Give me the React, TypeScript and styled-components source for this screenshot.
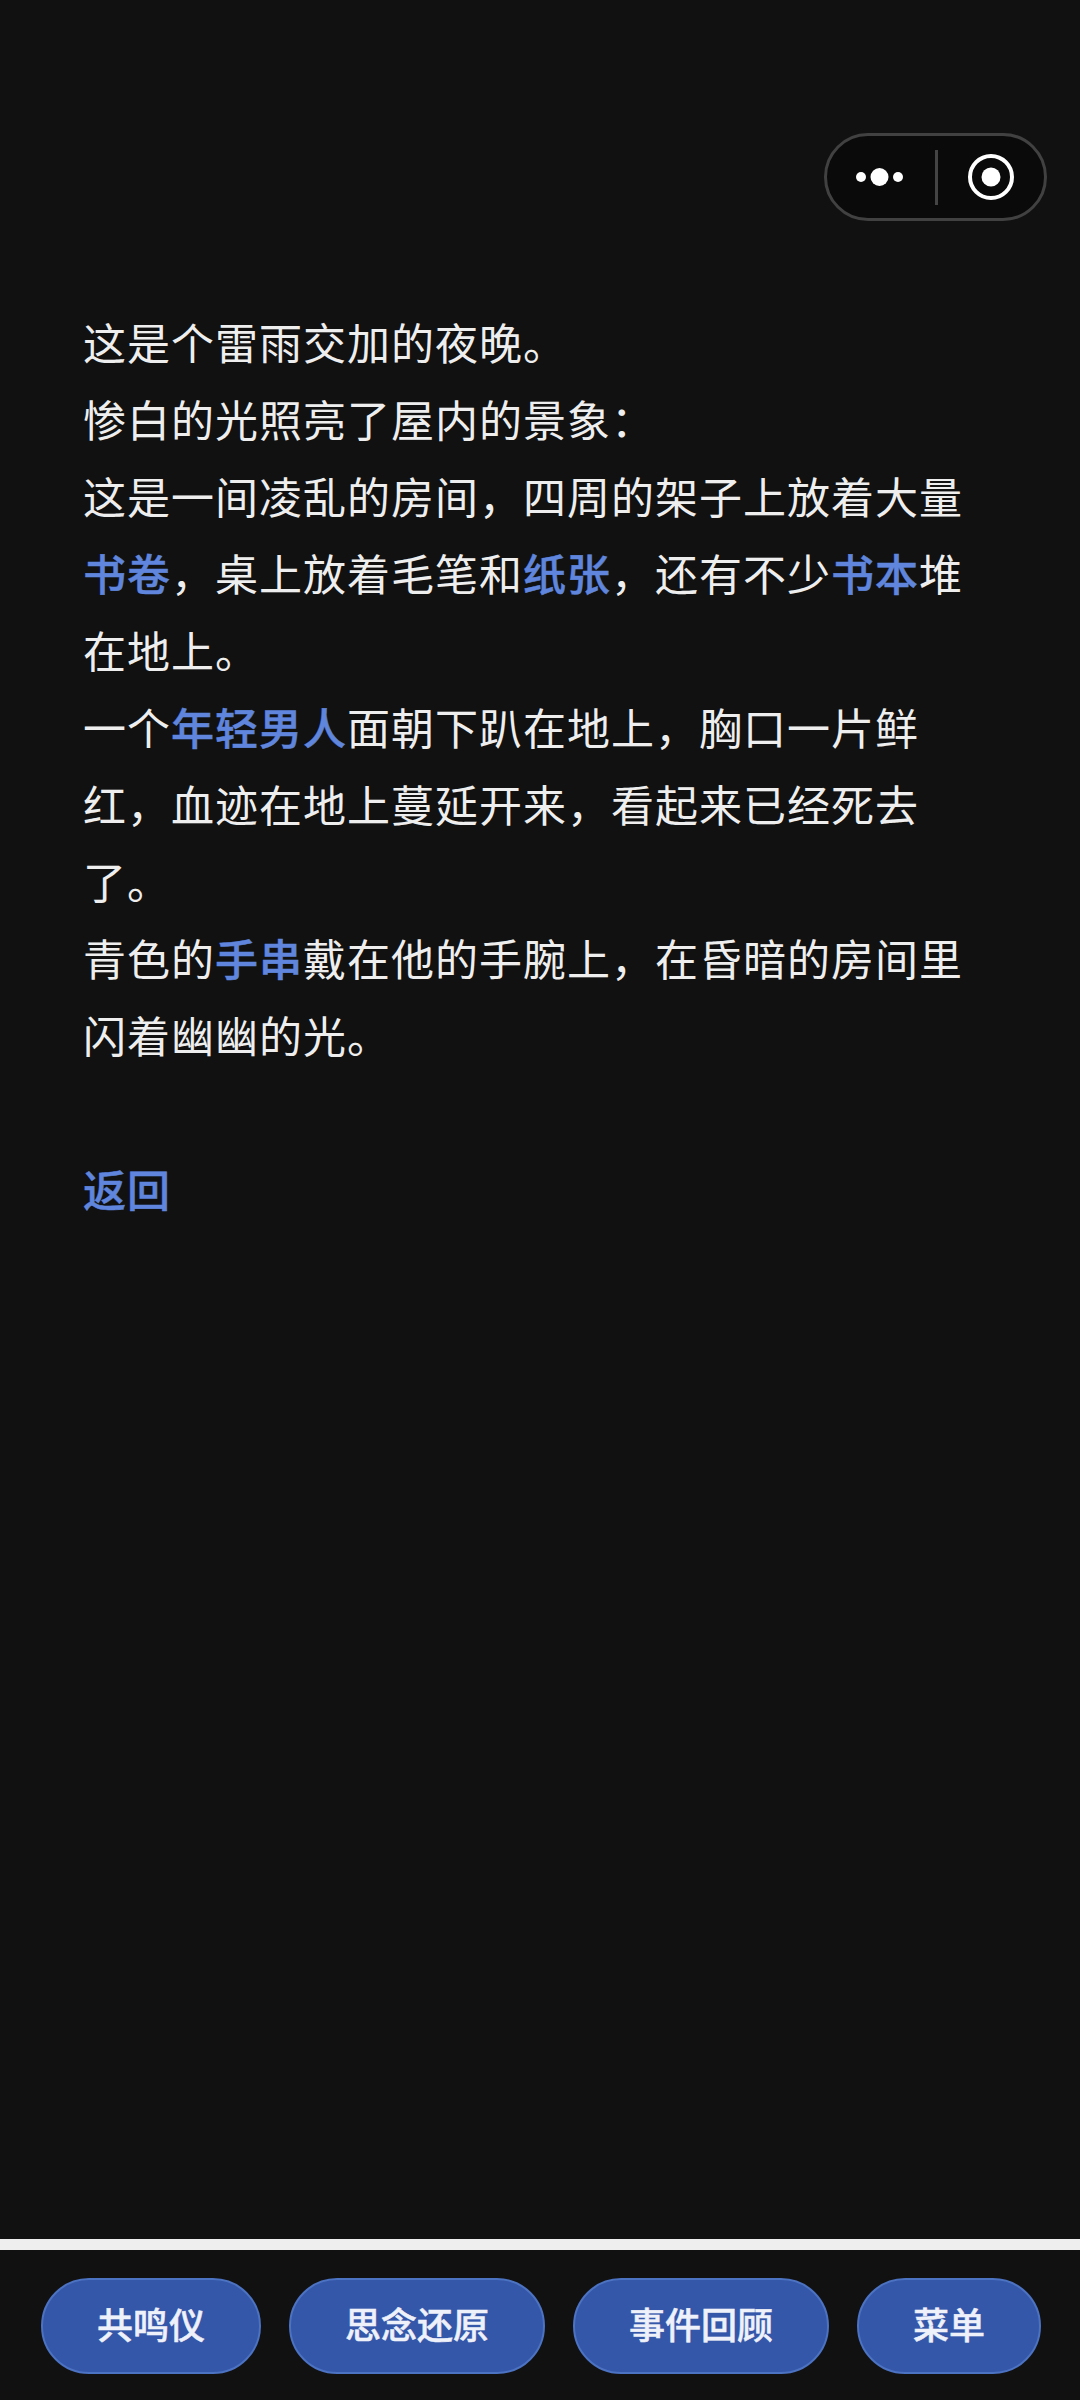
import styled, { createGlobalStyle } from 'styled-components';

const GlobalStyle = createGlobalStyle`
    html, body {
        margin: 0;
        padding: 0;
        background: #111111;
    }
    * {
        box-sizing: border-box;
    }
`

const Page = styled.div`
    position: relative;
    width: 1080px;
    height: 2400px;
    display: flex;
    flex-direction: column;
    background: #111111;
    font-family: "Noto Sans CJK SC", "Noto Sans", sans-serif;
    overflow: hidden;
`

const Capsule = styled.div`
    position: absolute;
    top: 133px;
    left: 824px;
    width: 223px;
    height: 88px;
    display: flex;
    align-items: center;
    border: 3px solid #414141;
    border-radius: 44px;
    background: #0a0a0a;
`

const CapsuleSide = styled.div<{ $width: number }>`
    width: ${(p) => p.$width}px;
    height: 100%;
    display: flex;
    align-items: center;
    justify-content: center;
`

const CapsuleDivider = styled.div`
    width: 3px;
    height: 55px;
    background: #444444;
`

const Story = styled.div`
    flex: 1;
    padding: 303px 0 0 83px;
    width: 968px;
    font-size: 43px;
    line-height: 77px;
    letter-spacing: 1px;
    font-weight: 400;
    color: #eeeeee;
`

const Line = styled.p`
    margin: 0;
`

const Clue = styled.span`
    color: #5f86dc;
    font-weight: 500;
    -webkit-text-stroke: 0.5px #5f86dc;
`

const BackLink = styled.p`
    margin: 77px 0 0;
    color: #5f86dc;
    font-weight: 500;
    -webkit-text-stroke: 0.5px #5f86dc;
`

const Divider = styled.div`
    height: 11px;
    background: #eeeeee;
`

const Toolbar = styled.div`
    height: 150px;
    padding: 28px 0 0 1px;
    display: flex;
    justify-content: center;
    align-items: flex-start;
    gap: 28px;
`

const ToolButton = styled.div`
    height: 96px;
    padding: 0 54px 6px;
    display: flex;
    align-items: center;
    justify-content: center;
    border: 2px solid #4c72c2;
    border-radius: 48px;
    background: #3557aa;
    color: #eef1f9;
    font-size: 36px;
    font-weight: 500;
    -webkit-text-stroke: 0.5px #eef1f9;
    &:first-child {
        margin-left: 1px;
    }
`

const App = () => {
    const buttons = ['共鸣仪', '思念还原', '事件回顾', '菜单']
    return (
        <Page>
            <GlobalStyle />
            <Capsule>
                <CapsuleSide $width={108}>
                    <svg width="62" height="20" viewBox="0 0 62 20">
                        <circle cx="11" cy="10" r="5" fill="#fff" />
                        <circle cx="29.5" cy="10" r="9" fill="#fff" />
                        <circle cx="48" cy="10" r="5" fill="#fff" />
                    </svg>
                </CapsuleSide>
                <CapsuleDivider />
                <CapsuleSide $width={106}>
                    <svg width="48" height="48" viewBox="0 0 48 48">
                        <circle cx="24" cy="24" r="21" fill="none" stroke="#fff" strokeWidth="4" />
                        <circle cx="24" cy="24" r="9.5" fill="#fff" />
                    </svg>
                </CapsuleSide>
            </Capsule>
            <Story>
                <Line>这是个雷雨交加的夜晚。</Line>
                <Line>惨白的光照亮了屋内的景象：</Line>
                <Line>这是一间凌乱的房间，四周的架子上放着大量<Clue>书卷</Clue>，桌上放着毛笔和<Clue>纸张</Clue>，还有不少<Clue>书本</Clue>堆在地上。</Line>
                <Line>一个<Clue>年轻男人</Clue>面朝下趴在地上，胸口一片鲜红，血迹在地上蔓延开来，看起来已经死去了。</Line>
                <Line>青色的<Clue>手串</Clue>戴在他的手腕上，在昏暗的房间里闪着幽幽的光。</Line>
                <BackLink>返回</BackLink>
            </Story>
            <Divider />
            <Toolbar>
                {buttons.map((item) => (
                    <ToolButton key={item}>{item}</ToolButton>
                ))}
            </Toolbar>
        </Page>
    )
}

export default App
